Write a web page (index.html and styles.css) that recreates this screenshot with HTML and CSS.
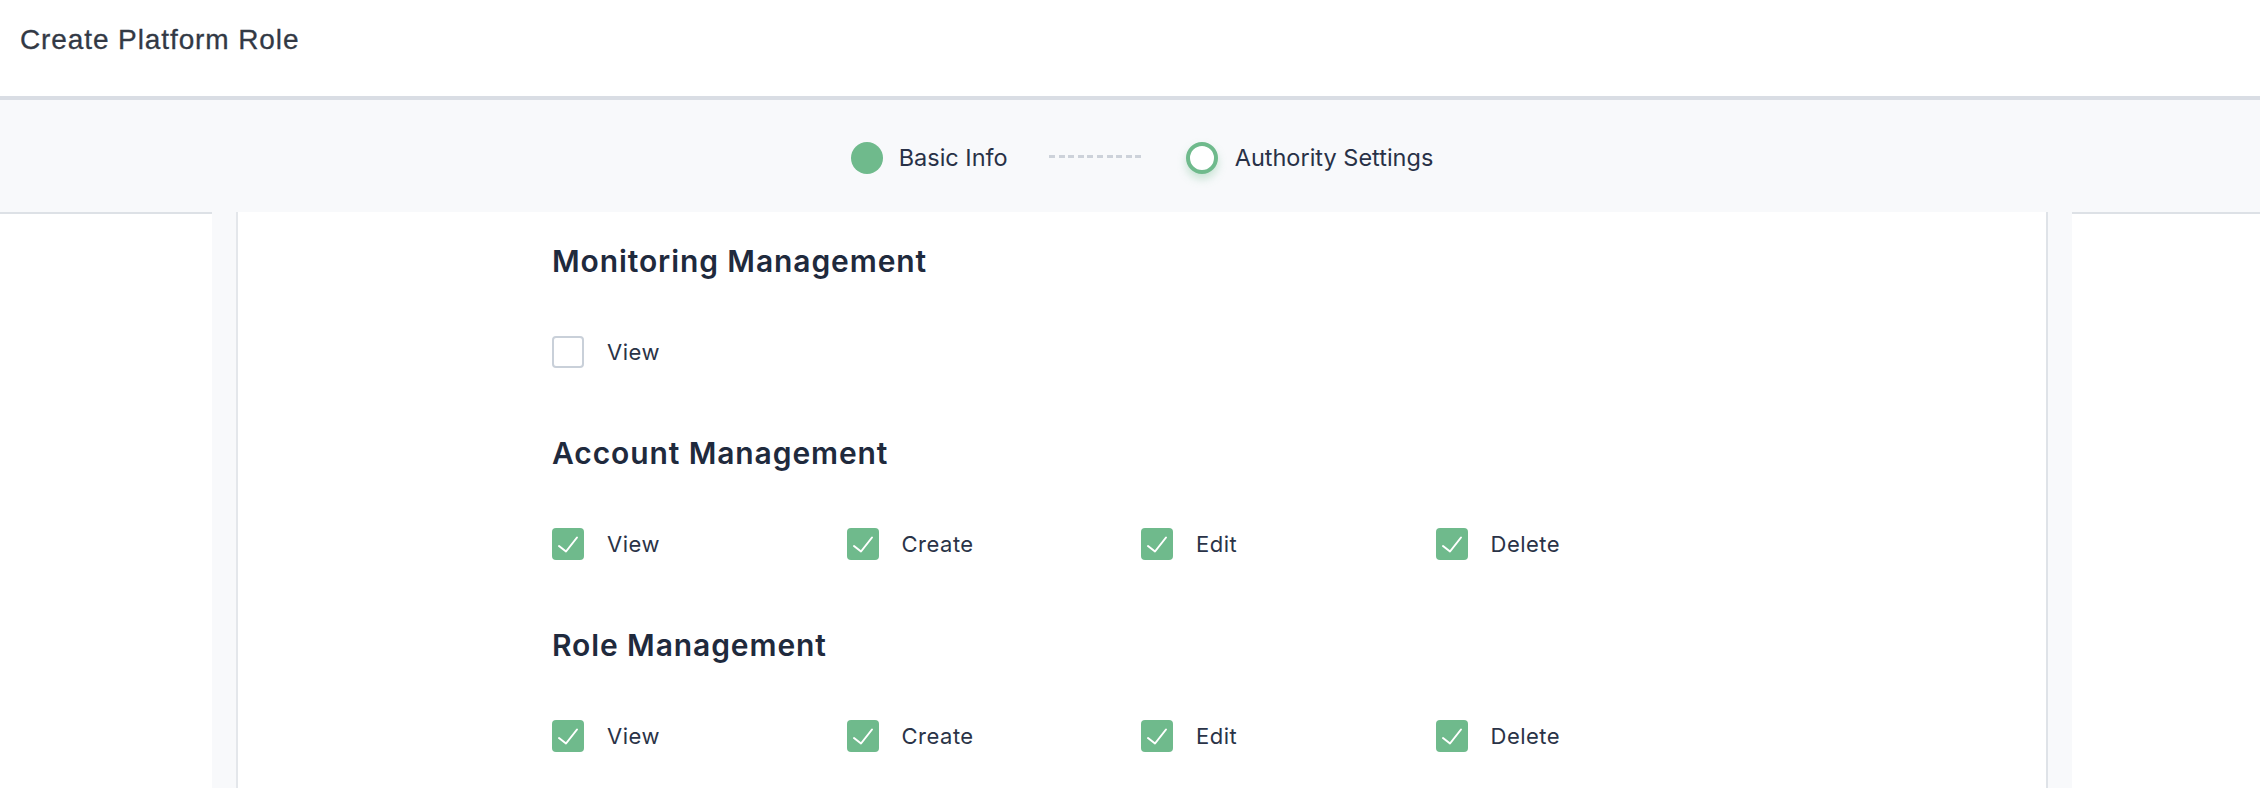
FILE: index.html
```html
<!DOCTYPE html>
<html lang="en">
<head>
<meta charset="utf-8">
<title>Create Platform Role</title>
<link rel="stylesheet" href="styles.css">
</head>
<body>
<header class="topbar">
  <h1 class="title">Create Platform Role</h1>
</header>
<div class="steps-band">
  <div class="steps">
    <div class="step">
      <span class="dot dot-done"></span>
      <span class="step-label">Basic Info</span>
    </div>
    <span class="connector"></span>
    <div class="step">
      <span class="dot dot-current"></span>
      <span class="step-label">Authority Settings</span>
    </div>
  </div>
</div>
<main class="page">
  <div class="gutter"></div>
  <div class="frame">
    <section class="card">
      <div class="group">
        <h2 class="group-title">Monitoring Management</h2>
        <div class="options">
          <label class="option"><span class="box"></span><span class="option-label">View</span></label>
        </div>
      </div>
      <div class="group">
        <h2 class="group-title">Account Management</h2>
        <div class="options">
          <label class="option"><span class="box box-checked"><svg viewBox="0 0 32 32"><polyline points="7,18 14,23.5 25,9.5"/></svg></span><span class="option-label">View</span></label>
          <label class="option"><span class="box box-checked"><svg viewBox="0 0 32 32"><polyline points="7,18 14,23.5 25,9.5"/></svg></span><span class="option-label">Create</span></label>
          <label class="option"><span class="box box-checked"><svg viewBox="0 0 32 32"><polyline points="7,18 14,23.5 25,9.5"/></svg></span><span class="option-label">Edit</span></label>
          <label class="option"><span class="box box-checked"><svg viewBox="0 0 32 32"><polyline points="7,18 14,23.5 25,9.5"/></svg></span><span class="option-label">Delete</span></label>
        </div>
      </div>
      <div class="group">
        <h2 class="group-title">Role Management</h2>
        <div class="options">
          <label class="option"><span class="box box-checked"><svg viewBox="0 0 32 32"><polyline points="7,18 14,23.5 25,9.5"/></svg></span><span class="option-label">View</span></label>
          <label class="option"><span class="box box-checked"><svg viewBox="0 0 32 32"><polyline points="7,18 14,23.5 25,9.5"/></svg></span><span class="option-label">Create</span></label>
          <label class="option"><span class="box box-checked"><svg viewBox="0 0 32 32"><polyline points="7,18 14,23.5 25,9.5"/></svg></span><span class="option-label">Edit</span></label>
          <label class="option"><span class="box box-checked"><svg viewBox="0 0 32 32"><polyline points="7,18 14,23.5 25,9.5"/></svg></span><span class="option-label">Delete</span></label>
        </div>
      </div>
    </section>
  </div>
  <div class="gutter gutter-right"></div>
</main>
</body>
</html>
```
FILE: styles.css
```css
html, body {
  margin: 0;
  padding: 0;
  background: #ffffff;
  overflow: hidden;
}

body {
  font-family: Inter, "Noto Sans", sans-serif;
  color: #2a3347;
  height: 788px;
  display: flex;
  flex-direction: column;
}

.topbar {
  height: 96px;
  box-sizing: content-box;
  border-bottom: 4px solid #d9dde4;
  background: #ffffff;
}

.title {
  margin: 0;
  padding: 20px 0 0 20px;
  font-family: "Liberation Sans", Arial, sans-serif;
  font-size: 28px;
  line-height: 40px;
  font-weight: 400;
  letter-spacing: 0.9px;
  color: #323945;
  -webkit-text-stroke: 0.3px #323945;
}

.steps-band {
  background: #f8f9fb;
  height: 112px;
  box-sizing: border-box;
  padding: 42px 0 0 212px;
}

.steps {
  width: 1860px;
  display: flex;
  justify-content: center;
  align-items: center;
  height: 32px;
}

.step {
  display: flex;
  align-items: center;
}

.dot {
  width: 32px;
  height: 32px;
  border-radius: 50%;
  box-sizing: border-box;
  flex: none;
}

.dot-done {
  background: #6fba8c;
  margin-right: 16px;
}

.dot-current {
  background: #ffffff;
  border: 4px solid #6fba8c;
  box-shadow: 0 5px 9px rgba(111, 186, 140, 0.35);
  margin-right: 17px;
}

.step-label {
  font-size: 23.5px;
  line-height: 32px;
  color: #283147;
}

.connector {
  width: 96px;
  height: 3px;
  margin: 0 41px;
  margin-top: -4px;
  background: repeating-linear-gradient(to right, #cdd2da 0 6px, transparent 6px 9.6px);
}

.page {
  flex: 1;
  display: flex;
  min-height: 0;
}

.gutter {
  width: 212px;
  flex: none;
  border-top: 2px solid #dde1e6;
}

.gutter-right {
  flex: 1;
  width: auto;
}

.frame {
  width: 1860px;
  flex: none;
  box-sizing: border-box;
  background: #f8f9fb;
  padding: 0 24px;
  display: flex;
}

.card {
  flex: 1;
  background: #ffffff;
  border-left: 2px solid #e4e7eb;
  border-right: 2px solid #dfe3e8;
  padding: 29px 0 0 314px;
}

.group {
  padding-bottom: 65px;
}

.group-title {
  margin: 0 0 55px;
  font-size: 30px;
  line-height: 40px;
  font-weight: 600;
  letter-spacing: 0.9px;
  color: #1f2a3d;
}

.options {
  display: grid;
  grid-template-columns: repeat(4, 294.5px);
  height: 32px;
}

.option {
  display: flex;
  align-items: center;
  height: 32px;
}

.box {
  width: 32px;
  height: 32px;
  box-sizing: border-box;
  border-radius: 4px;
  border: 2px solid #c9d0d9;
  background: #ffffff;
  flex: none;
  margin-right: 23px;
  display: flex;
}

.box-checked {
  border: none;
  background: #6fba8c;
}

.box svg {
  width: 32px;
  height: 32px;
}

.box polyline {
  fill: none;
  stroke: #ffffff;
  stroke-width: 2;
  stroke-linecap: round;
  stroke-linejoin: round;
}

.option-label {
  font-size: 22px;
  line-height: 32px;
  letter-spacing: 0.5px;
  color: #2a3347;
}
```
